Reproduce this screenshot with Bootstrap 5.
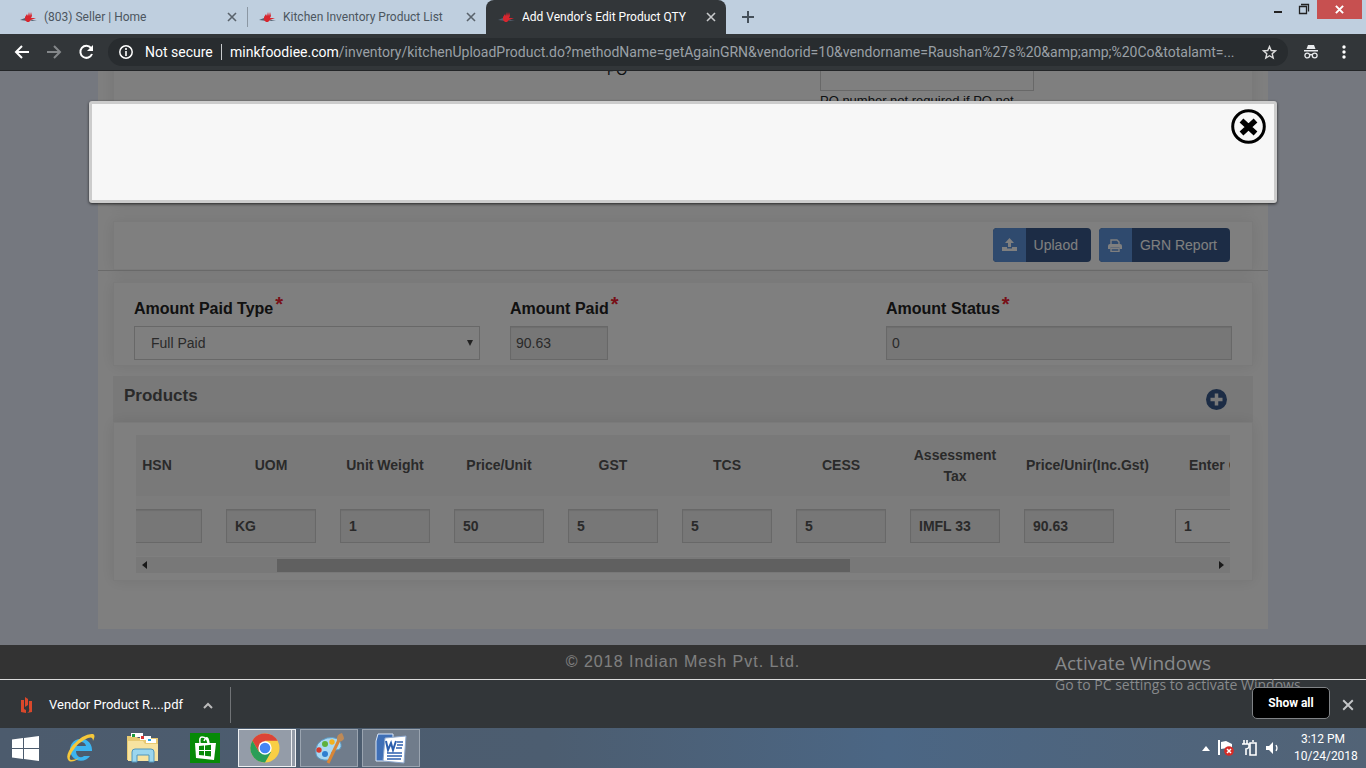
<!DOCTYPE html>
<html lang="en">
<head>
<meta charset="utf-8">
<meta name="viewport" content="width=device-width, initial-scale=1">
<title>Add Vendor's Edit Product QTY</title>
<link href="https://cdn.jsdelivr.net/npm/bootstrap@5.3.0/dist/css/bootstrap.min.css" rel="stylesheet">
<style>
:root{--chrome:#323639;--ui:Roboto,"Noto Sans",sans-serif}
body{font-family:"Liberation Sans",Arial,sans-serif;font-size:14px;line-height:20px;overflow:hidden;background:var(--chrome)}
button{padding:0;border:0;background:none}
svg{display:block;flex:none}
.ui-font{font-family:var(--ui)}
/* tab strip */
.tabstrip{height:34px;background:#bfcfdf;font-size:12px;color:#4c5660}
.tab{width:238px;padding:0 10px 0 11px}
.tab.first{width:247px;padding-left:20px}
.tab a{color:inherit;text-decoration:none;flex:1;margin-left:7px;white-space:nowrap;overflow:hidden}
.tab button{color:#5a636c}
.tab.current{width:240px;background:var(--chrome);color:#fff;border-radius:8px 8px 0 0;padding-left:12px}
.tab.current button{color:#c8cacc}
.tab-sep{width:1px;height:20px;background:#8b97a3}
.win-close{width:45px;height:19px;background:#c75050}
/* toolbar */
.toolbar{height:37px;background:var(--chrome);border-bottom:1px solid #232527;padding:0 20px 0 14px}
.omnibox{height:28px;border-radius:14px;background:#282c2f;padding:0 11px;margin-left:14px;font-size:14px;color:#9aa0a6}
.url-box{flex:1;min-width:0;white-space:nowrap;overflow:hidden;text-overflow:ellipsis}
.url-box b{font-weight:400;color:#fff}
.omni-sep{width:1px;height:16px;background:#c8cacc;margin:0 8px 0 9px}
.host-state{width:67px;margin-left:12px}
/* page */
.viewport{background:#ebf0ff}
.sheet{max-width:1170px;padding:0 15px 48px;background:#fff;margin-bottom:16px}
.panel{background:#fff;border:1px solid #f4f4f4;box-shadow:0 0 14px rgba(0,0,0,.09);padding:0 20px}
.po-panel{margin-top:-16px;height:149px;margin-bottom:17px}
.po-grid{display:grid;grid-template-columns:473fr 213fr 214px 198fr}
.po-grid .form-control{height:35px}
.po-grid p{font-size:13px;margin:0}
.form-control,.form-select{height:34px;border:1px solid #d0d0d0;border-radius:0;font-size:14px;color:#555;padding:6px 5px}
.form-control:disabled{background:#eee;color:#555;box-shadow:inset 0 1px 1px rgba(0,0,0,.08);opacity:1}
.form-select{padding:0 16px;background:#fff url("data:image/svg+xml,%3Csvg xmlns='http://www.w3.org/2000/svg' viewBox='0 0 8 8'%3E%3Cpath d='M1 1h6L4 7z' fill='%23444'/%3E%3C/svg%3E") no-repeat right 5px center/8px 8px}
.actions{padding:6px 22px 7px;gap:8px}
.act{height:34px;border-radius:4px;overflow:hidden;background:#38598a;color:#fff;display:flex;align-items:center}
.act i{width:33px;height:34px;background:#5e94dc;display:flex;align-items:center;justify-content:center;margin-right:8px}
.act span{margin-right:13px}
.rule{height:1px;background:#d4d4d4;margin:0 -15px 11px}
.amounts{padding-top:14px;padding-bottom:5px;margin-bottom:10px}
.amounts .row{--bs-gutter-x:30px}
.amounts label{font-size:16px;font-weight:700;line-height:24px;margin-bottom:5px;color:#222;display:flex}
.amounts sup{color:#f0202f;font-size:20px;line-height:24px;top:-5px;margin-left:2px}
.paid{width:98px}
.products-bar{height:46px;background:#f3f3f3;padding:0 26px 0 11px}
.products-bar h2{font-size:17px;line-height:20px;font-weight:700;color:#555;margin:10px 0 0}
.products-bar button{margin-top:13px;height:20px}
.products{padding:12px 22px 7px}
.products .scroller{overflow:hidden}
.items{table-layout:fixed;width:1178px;margin:0 0 1px -36px;background:#f9f9f9;color:#555}
.items th{height:61px;padding:0 12px;background:#f3f3f3;text-align:center;line-height:21px;font-weight:700;vertical-align:middle}
.items th:nth-child(9){padding:0 4px}
.items td{padding:13px 12px}
.items .form-control{width:90px;font-weight:700;padding:6px 8px}
.sbar{height:16px;background:#f1f1f1;padding:0 6px}
.thumb-bar{width:53%;height:13px;background:#c1c1c1;margin-left:12%}
.page-foot{height:34px;background:#666;color:#fff;font-size:16px;letter-spacing:1px}
.shade{background:rgba(0,0,0,.5);z-index:2}
.notice{z-index:3;top:30px;left:0;right:0;margin:auto;width:87%;min-height:102px;border:3px solid #ccc;border-radius:3px;background:#f7f7f7;box-shadow:0 1px 3px rgba(0,0,0,.7);padding:5px 8px}
/* downloads */
.downloads{height:49px;border-top:1px solid #dcdcdc;background:var(--chrome);color:#fff;font-size:13px;padding:2px 12px 0 20px}
.dl-name{width:134px}
.dl-sep{width:1px;height:36px;background:#707376;margin-left:17px}
.show-all{width:78px;height:32px;background:#000;border:1px solid #808386;border-radius:5px;color:#fff;font-size:12px;font-weight:700;z-index:5;margin-bottom:4px}
.watermark{right:56px;bottom:73px;width:255px;color:#87898b;z-index:4;font-family:"Open Sans",sans-serif}
.watermark strong{display:block;font-size:19px;font-weight:400;line-height:24px}
.watermark span{display:block;font-size:14px;line-height:20px;white-space:nowrap}
/* taskbar */
.taskbar{height:40px;background:linear-gradient(90deg,#4c5b6d,#4c5d70 40%,#4b6684 65%,#526376);color:#fff;padding:0 14px 0 0}
.taskbar button{display:flex;align-items:center;justify-content:center}
.start{width:50px}
.app{width:62px;height:40px}
.running{width:58px;height:38px;border:1px solid #9aa4b0!important;background:#707c8b!important;margin-right:4px}
.active-app{width:54px;height:38px;border:1px solid #eef0f2!important;background:#949ca8!important;margin-left:2px}
.stack-edge{width:4px;height:38px;border:1px solid #eef0f2;border-left:0;background:#949ca8;margin:0 4px 0 0}
.clock{width:58px;font-size:12px;line-height:17px;text-align:center;margin-left:14px;white-space:nowrap}
</style>
</head>
<body>
<svg width="0" height="0" class="position-absolute"><defs>
<g id="crab"><path d="M0 9l5-2 3 3zM10 9l7 0-5 1z" fill="#536070"/><path d="M5 6l2-3 1 2 1-4 1 4 1-4 1 4-1 2 5 0-5 2-2 2H7L5 9z" fill="#d8262f"/></g>
<path id="x" d="M1 1l8 8M9 1L1 9" fill="none" stroke="currentColor" stroke-width="1.6"/>
</defs></svg>
<div class="d-flex flex-column vh-100">
<header class="ui-font">
  <div class="tabstrip d-flex align-items-center">
    <div class="tab first d-flex align-items-center"><svg width="17" height="12"><use href="#crab"/></svg><a href="#">(803) Seller | Home</a><button aria-label="Close tab"><svg width="10" height="10"><use href="#x"/></svg></button></div>
    <span class="tab-sep"></span>
    <div class="tab d-flex align-items-center"><svg width="17" height="12"><use href="#crab"/></svg><a href="#">Kitchen Inventory Product List</a><button aria-label="Close tab"><svg width="10" height="10"><use href="#x"/></svg></button></div>
    <div class="tab current d-flex align-items-center align-self-stretch"><svg width="17" height="12"><use href="#crab"/></svg><a href="#">Add Vendor's Edit Product QTY</a><button aria-label="Close tab"><svg width="10" height="10"><use href="#x"/></svg></button></div>
    <button class="ms-3" aria-label="New tab"><svg width="12" height="12"><path d="M6 0v12M0 6h12" stroke="#45505a" stroke-width="2"/></svg></button>
    <div class="d-flex align-self-start ms-auto me-1">
      <button aria-label="Minimize"><svg width="26" height="19"><path d="M9 12h8" stroke="#222" stroke-width="2"/></svg></button>
      <button aria-label="Restore"><svg width="26" height="19"><path d="M8.500 6.500h7v7h-7zM10 4.500h7.500v7" fill="none" stroke="#222" stroke-width="1.300"/></svg></button>
      <button class="win-close d-flex align-items-center justify-content-center text-white" aria-label="Close"><svg width="9" height="9" viewBox="0 0 10 10" stroke-width="2"><path d="M1 1l8 8M9 1L1 9" stroke="#fff" stroke-width="2.200"/></svg></button>
    </div>
  </div>
  <div class="toolbar d-flex align-items-center">
    <button aria-label="Back"><svg width="16" height="16"><path d="M15 8H2M8 2L2 8l6 6" fill="none" stroke="#fff" stroke-width="2"/></svg></button>
    <button class="ms-3" aria-label="Forward"><svg width="16" height="16"><path d="M1 8h13M8 2l6 6-6 6" fill="none" stroke="#84878a" stroke-width="2"/></svg></button>
    <button class="ms-3" aria-label="Reload"><svg width="16" height="16"><path d="M13 4a6 6 0 1 0 1 6" fill="none" stroke="#fff" stroke-width="2"/><path d="M15 1v6H9z" fill="#fff"/></svg></button>
    <div class="omnibox d-flex align-items-center flex-grow-1 overflow-hidden">
      <svg width="14" height="14"><circle cx="7" cy="7" r="6.200" fill="none" stroke="#fff" stroke-width="1.500"/><path d="M7 6v5M7 3v2" stroke="#fff" stroke-width="1.600"/></svg>
      <span class="host-state text-white text-nowrap">Not secure</span><span class="omni-sep"></span>
      <div class="url-box"><b>minkfoodiee.com</b>/inventory/kitchenUploadProduct.do?methodName=getAgainGRN&amp;vendorid=10&amp;vendorname=Raushan%27s%20&amp;amp;amp;%20Co&amp;totalamt=...</div>
      <button class="ms-3" aria-label="Bookmark"><svg width="15" height="15"><path d="M7.500 1.500l1.700 4 4.300.4-3.300 2.800 1 4.300-3.700-2.300L3.800 13l1-4.300L1.500 5.900l4.300-.4z" fill="none" stroke="#dcdcdc" stroke-width="1.400"/></svg></button>
    </div>
    <svg class="ms-3" width="14" height="14"><path d="M4 0h6l1.500 4h-9zM0 5h14v1.600H0z" fill="#e8eaed"/><g fill="none" stroke="#e8eaed" stroke-width="1.300"><circle cx="3.300" cy="10.500" r="2.400"/><circle cx="10.700" cy="10.500" r="2.400"/><path d="M5.700 10q1.300-1 2.600 0"/></g></svg>
    <button class="ms-4" aria-label="Menu"><svg width="4" height="14" fill="#fff"><circle cx="2" cy="2" r="1.700"/><circle cx="2" cy="7" r="1.700"/><circle cx="2" cy="12" r="1.700"/></svg></button>
  </div>
</header>

<main class="viewport flex-grow-1 position-relative overflow-hidden">
  <div class="sheet mx-auto">
    <section class="panel po-panel overflow-hidden">
      <div class="po-grid"><span></span><label for="po" class="pt-1">PO</label><div><input id="po" class="form-control"><p>PO number not required if PO not</p></div></div>
    </section>
    <section class="panel actions d-flex justify-content-end">
      <button class="act"><i><svg width="15" height="14" fill="#fff"><path d="M7.500 0L12 5H9v4H6V5H3zM0 9h5v1.500h5V9h5v4H0z"/></svg></i><span>Uplaod</span></button>
      <button class="act"><i><svg width="14" height="13"><path d="M3 6V1h6l2 2v3M3 9.500h8v3H3z" fill="none" stroke="#fff" stroke-width="1.400"/><path d="M0 7q0-2 2-2h10q2 0 2 2v3h-2.500V8.500h-9V10H0z" fill="#fff"/></svg></i><span>GRN Report</span></button>
    </section>
    <div class="rule"></div>
    <section class="panel amounts">
      <div class="row">
        <div class="col-4"><label for="ptype">Amount Paid Type<sup>*</sup></label><select id="ptype" class="form-select"><option>Full Paid</option></select></div>
        <div class="col-4"><label for="paid">Amount Paid<sup>*</sup></label><input id="paid" class="form-control paid" value="90.63" disabled></div>
        <div class="col-4"><label for="status">Amount Status<sup>*</sup></label><input id="status" class="form-control" value="0" disabled></div>
      </div>
    </section>
    <div class="products-bar d-flex justify-content-between align-items-start"><h2>Products</h2><button aria-label="Add product"><svg width="21" height="21"><circle cx="10.500" cy="10.500" r="10.500" fill="#38598a"/><path d="M10.500 4.500v12M4.500 10.500h12" stroke="#f3f3f3" stroke-width="3.500"/></svg></button></div>
    <section class="panel products">
      <div class="scroller">
        <table class="items">
          <colgroup><col width="114"><col width="114"><col width="114"><col width="114"><col width="114"><col width="114"><col width="114"><col width="114"><col width="151"><col width="115"></colgroup>
          <thead><tr><th>HSN</th><th>UOM</th><th>Unit Weight</th><th>Price/Unit</th><th>GST</th><th>TCS</th><th>CESS</th><th>Assessment Tax</th><th>Price/Unir(Inc.Gst)</th><th>Enter Qty</th></tr></thead>
          <tbody><tr>
            <td><input class="form-control" aria-label="HSN" disabled></td>
            <td><input class="form-control" aria-label="UOM" value="KG" disabled></td>
            <td><input class="form-control" aria-label="Unit Weight" value="1" disabled></td>
            <td><input class="form-control" aria-label="Price per unit" value="50" disabled></td>
            <td><input class="form-control" aria-label="GST" value="5" disabled></td>
            <td><input class="form-control" aria-label="TCS" value="5" disabled></td>
            <td><input class="form-control" aria-label="CESS" value="5" disabled></td>
            <td><input class="form-control" aria-label="Assessment Tax" value="IMFL 33" disabled></td>
            <td><input class="form-control" aria-label="Price including GST" value="90.63" disabled></td>
            <td><input class="form-control" aria-label="Quantity" value="1"></td>
          </tr></tbody>
        </table>
      </div>
      <div class="sbar d-flex align-items-center">
        <svg width="5" height="8"><path d="M5 0v8L0 4z" fill="#333"/></svg><div class="thumb-bar"></div><svg class="ms-auto" width="5" height="8"><path d="M0 0v8l5-4z" fill="#333"/></svg>
      </div>
    </section>
  </div>
  <footer class="page-foot d-flex align-items-center justify-content-center">© 2018 Indian Mesh Pvt. Ltd.</footer>
  <div class="shade position-absolute top-0 bottom-0 start-0 end-0"></div>
  <div class="notice position-absolute d-flex justify-content-end align-items-start" role="dialog" aria-label="Notice">
    <button aria-label="Close"><svg width="35" height="35"><circle cx="17.500" cy="17.500" r="15.800" fill="none" stroke="#000" stroke-width="3"/><path d="M10.500 11.500l14 13M24.500 11.500l-14 13" stroke="#000" stroke-width="5.500"/></svg></button>
  </div>
</main>

<div class="watermark position-absolute"><strong>Activate Windows</strong><span>Go to PC settings to activate Windows.</span></div>
<section class="downloads d-flex align-items-center ui-font">
  <svg width="13" height="16"><path d="M1 3h3v9l2 1v3l-5-1zM5 0l3 2v6l-3 2zM9 4h3v11l-5 1q3-1 2-5z" fill="#d9482b"/></svg>
  <a href="#" class="dl-name text-white text-decoration-none text-nowrap ms-3">Vendor Product R....pdf</a>
  <button class="ms-3 ps-1" aria-label="Download options"><svg width="10" height="7"><path d="M1 6l4-4 4 4" fill="none" stroke="#bbb" stroke-width="2"/></svg></button>
  <span class="dl-sep"></span>
  <button class="show-all ms-auto position-relative">Show all</button>
  <button class="ms-2 ps-1" aria-label="Close downloads"><svg width="12" height="12" viewBox="0 0 10 10" color="#c4c6c8"><use href="#x"/></svg></button>
</section>

<nav class="taskbar d-flex align-items-center ui-font" aria-label="Taskbar">
  <button class="start" aria-label="Start"><svg width="27" height="25" fill="#fff"><path d="M0 3.500l11-1.500v10H0zM12 2l15-2v12H12zM0 13h11v10L0 21.500zM12 13h15v12l-15-2z"/></svg></button>
  <button class="app" aria-label="Internet Explorer"><svg width="32" height="32"><path d="M27 18a11 11 0 1 0-2 6h-6q-4 3-7-1-1-2-1-4h16zM11 14q1-4 5-4t5 4z" fill="#3db4f0" fill-rule="evenodd"/><path d="M4 29Q-1 24 8 13 19 1 28 2q3 1 0 7 0-5-5-3Q13 10 7 20q-4 7-1 8 4 0 8-2-6 5-10 3z" fill="#f6c83a"/></svg></button>
  <button class="app" aria-label="File Explorer"><svg width="32" height="30"><path d="M0 3h9l2 2h20v22H0z" fill="#e8ca72"/><path d="M4 0h12v4H4z" fill="#fff"/><path d="M5 1h3v3H5z" fill="#1c9b3c"/><path d="M13 3h11v4H13z" fill="#fff"/><path d="M14 3h3v3h-3z" fill="#d33"/><path d="M19 6h10v4H19z" fill="#fff"/><path d="M21 6h3v2h-3z" fill="#25a4e0"/><path d="M1 8h15l2 3h13v17H1z" fill="#f7e3a0"/><path d="M5 29V19q0-3 3-3h16q3 0 3 3v10h-5v-7H10v7z" fill="#9bd6ee" stroke="#5196bb"/></svg></button>
  <button class="app" aria-label="Store"><svg width="30" height="30"><path d="M0 0h30v30H0z" fill="#078a07"/><path d="M10 10Q9 4 12 4q5 0 6 6M14 8q2-5 4-2l1 4" fill="none" stroke="#fff" stroke-width="1.500"/><path d="M5 10l21 0-2 17-18-2z" fill="#fff"/><path d="M9 13l5-.5V17H9zM15 12.400l6-.6V17h-6zM9 18h5v4.600l-5-.5zM15 18h6v5.500l-6-.8z" fill="#078a07"/></svg></button>
  <button class="active-app" aria-label="Chrome"><svg width="30" height="30" viewBox="-15 -15 30 30"><circle r="14.500" fill="#f9cf45"/><path d="M-12.600-7.300A14.500 14.500 0 0 1 12.600-7.300H0L-6 4z" fill="#dc4437"/><path d="M-12.600-7.300A14.500 14.500 0 0 0 0 14.500L6 4H-6z" fill="#2a9e58"/><circle r="6.700" fill="#fff"/><circle r="5.300" fill="#4485f4"/></svg></button><span class="stack-edge"></span>
  <button class="running" aria-label="Paint"><svg width="32" height="32"><path d="M3 22Q1 10 14 6q12-2 14 6 1 6-5 6-6 1-4 5 0 6-8 5-7-1-8-6z" fill="#a9d8f2" stroke="#5a9ac4"/><circle cx="12" cy="12" r="3" fill="#5eb13c"/><circle cx="19" cy="10" r="2.700" fill="#f2b21e"/><circle cx="6" cy="18" r="2.700" fill="#d53a2c"/><circle cx="12" cy="22" r="3" fill="#2e7fd0"/><path d="M15 31L26 8" stroke="#d98636" stroke-width="3"/><path d="M24 9q-1-7 5-8 2 4 2 6-3 4-7 2z" fill="#bf8a57"/></svg></button>
  <button class="running" aria-label="Word"><svg width="32" height="31"><path d="M3 1h15v27H1V8z" fill="#3f6fb6" stroke="#dce8f8"/><path d="M10 5l21-2-2 27-21-2z" fill="#fff" stroke="#8ba6cc"/><path d="M11 8l2 9 3-7 2 7 3-9" fill="none" stroke="#2c5fae" stroke-width="2"/><path d="M22 9h6M22 12h6M21 15h6M12 20h15M12 23h15M12 26h14" stroke="#2c5fae" stroke-width="1.500"/></svg></button>
  <div class="ms-auto d-flex align-items-center">
    <svg width="8" height="5"><path d="M4 0l4 5H0z" fill="#fff"/></svg>
    <svg class="ms-2 me-2" width="16" height="16"><path d="M1 0v15" stroke="#fff" stroke-width="2"/><path d="M3 2l5-1 6 3v6l-5-2-6 1z" fill="#fff"/><circle cx="11" cy="11" r="4.800" fill="#d62b26"/><path d="M9 9l4 4M13 9l-4 4" stroke="#fff" stroke-width="1.500"/></svg>
    <svg width="16" height="16"><path d="M2 0v4M5 0v4M0 4h7v3q-1 2-3 2v6" fill="none" stroke="#fff" stroke-width="1.600"/><path d="M8 3h6v12H8zM10 1h2" fill="none" stroke="#fff" stroke-width="1.600"/></svg>
    <svg class="ms-2" width="14" height="14"><path d="M0 5h3l4-4v12l-4-4H0z" fill="#fff"/><path d="M10 4q2 3 0 6" fill="none" stroke="#fff" stroke-width="1.300"/></svg>
    <div class="clock">3:12 PM<br>10/24/2018</div>
  </div>
</nav>
</div>
<script src="https://cdn.jsdelivr.net/npm/bootstrap@5.3.0/dist/js/bootstrap.bundle.min.js"></script>
</body>
</html>
